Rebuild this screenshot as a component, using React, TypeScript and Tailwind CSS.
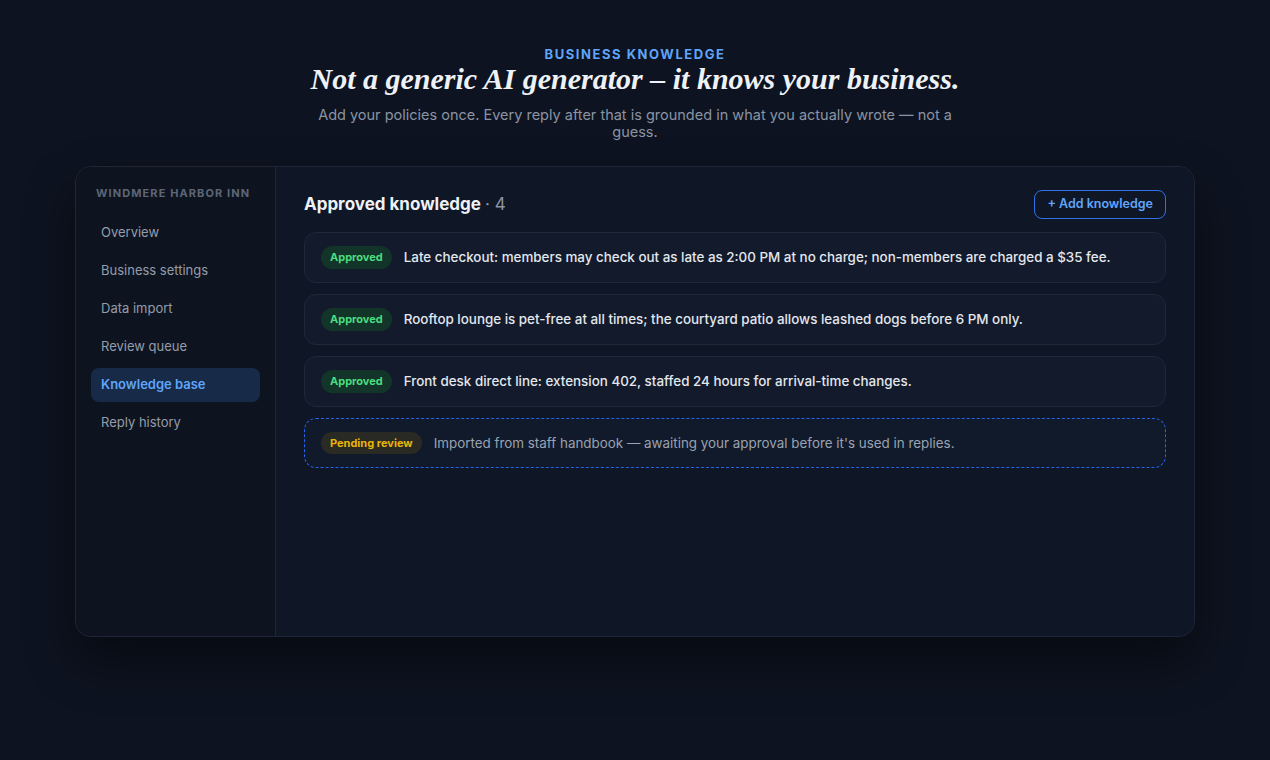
const nav = [
  "Overview",
  "Business settings",
  "Data import",
  "Review queue",
  "Knowledge base",
  "Reply history",
];

const approved = [
  "Late checkout: members may check out as late as 2:00 PM at no charge; non-members are charged a $35 fee.",
  "Rooftop lounge is pet-free at all times; the courtyard patio allows leashed dogs before 6 PM only.",
  "Front desk direct line: extension 402, staffed 24 hours for arrival-time changes.",
];

export default function App() {
  return (
    <div
      className="min-h-[760px] bg-[#0d1320] pt-[46px] pb-20 text-white"
      style={{ fontFamily: "Inter, 'Noto Sans', sans-serif" }}
    >
      <header className="flex flex-col items-center text-center">
        <span className="text-[13px] font-bold leading-4 tracking-[0.12em] text-[#60a5fa]">
          BUSINESS KNOWLEDGE
        </span>
        <h1
          className="text-[30px] font-bold italic leading-[33px] text-[#eef1f6]"
          style={{ fontFamily: "'Liberation Serif', 'DejaVu Serif', serif" }}
        >
          Not a generic AI generator – it knows your business.
        </h1>
        <p className="mt-[11px] max-w-[645px] text-[14.5px] leading-[17px] text-[#8b93a3]">
          Add your policies once. Every reply after that is grounded in what you actually wrote — not a guess.
        </p>
      </header>

      <div className="mx-auto mt-[26px] flex h-[471px] w-[1120px] overflow-hidden rounded-2xl border border-[#1e2638] shadow-[0_24px_50px_rgba(0,0,0,0.45)]">
        <aside className="w-[200px] shrink-0 border-r border-[#1e2536] bg-[#0e141f] px-[15px] pt-[18px]">
          <div className="px-[5px] text-[11px] font-bold tracking-[0.1em] text-[#5d6677]">
            WINDMERE HARBOR INN
          </div>
          <nav className="mt-[14px] flex flex-col gap-1">
            {nav.map((item) => {
              const active = item === "Knowledge base";
              return (
                <div
                  key={item}
                  className={
                    active
                      ? "flex h-[34px] items-center rounded-lg bg-[#172a47] px-[10px] text-[13px] font-semibold text-[#60a5fa]"
                      : "flex h-[34px] items-center rounded-lg px-[10px] text-[13px] text-[#959cab]"
                  }
                >
                  {item}
                </div>
              );
            })}
          </nav>
        </aside>

        <main className="flex-1 bg-[#0f1727] px-[28px] pt-[23px]">
          <div className="flex items-center justify-between">
            <h2 className="text-[17px] font-bold text-[#eef1f6]">
              Approved knowledge <span className="font-normal text-[#8b93a3]">· 4</span>
            </h2>
            <button className="h-[29px] rounded-lg border border-[#2f6fe8] px-3 text-[12.5px] font-semibold text-[#60a5fa]">
              + Add knowledge
            </button>
          </div>

          <div className="mt-[13px] flex flex-col gap-[11px]">
            {approved.map((text) => (
              <div
                key={text}
                className="flex h-[51px] items-center gap-3 rounded-xl border border-[#1f2738] bg-[#121a2b] px-4"
              >
                <span className="rounded-full bg-[#133428] px-[9px] py-[3px] text-[11px] font-bold text-[#4ade80]">
                  Approved
                </span>
                <span className="text-[13.4px] font-medium text-[#e3e7ee]">{text}</span>
              </div>
            ))}
            <div className="flex h-[50px] items-center gap-3 rounded-xl border border-dashed border-[#2563eb] bg-[#111a2b] px-4">
              <span className="rounded-full bg-[#2a2a24] px-[9px] py-[3px] text-[11px] font-bold text-[#eab308]">
                Pending review
              </span>
              <span className="text-[13.4px] text-[#9aa2b1]">
                Imported from staff handbook — awaiting your approval before it's used in replies.
              </span>
            </div>
          </div>
        </main>
      </div>
    </div>
  );
}
